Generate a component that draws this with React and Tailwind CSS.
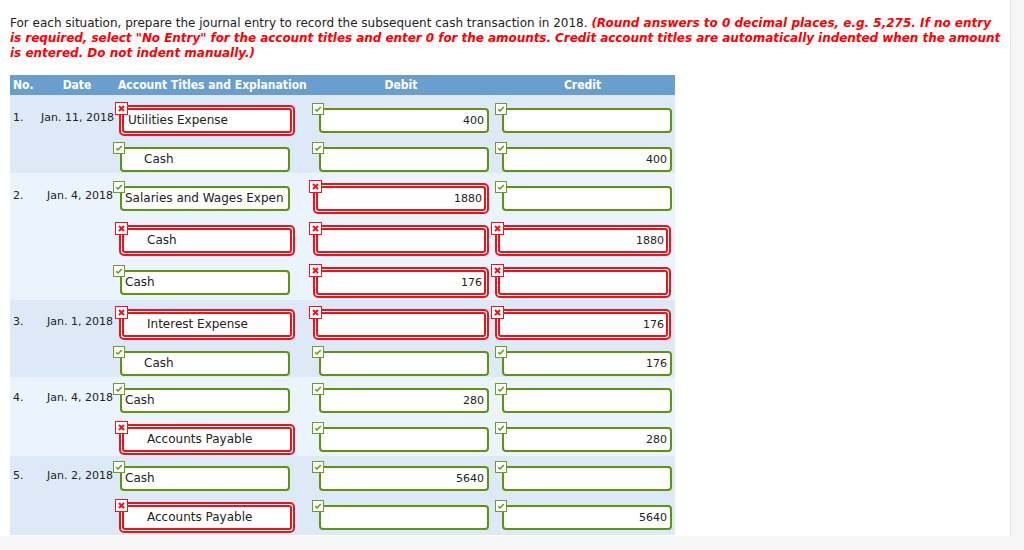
import React from 'react';

const cols = {
    acct: { cell: 'w-[187px]', g: 'ml-[7px]', r: 'ml-[6px]' },
    dr: { cell: 'w-[190px]', g: 'ml-[19px]', r: 'ml-[13px]' },
    cr: { cell: 'w-[185px]', g: 'ml-[12px]', r: 'ml-[5px]' },
};

const entries = [
    {
        no: '1.', date: 'Jan. 11, 2018', bg: 'bg-[#dde9f7]', pt: 'pt-[15px]',
        rows: [
            { h: 'h-[39px]', pt: 'pt-[13px]', acct: ['Utilities Expense', false, false], dr: ['400', true], cr: ['', true] },
            { h: 'h-[39px]', pt: 'pt-[13px]', acct: ['Cash', true, true], dr: ['', true], cr: ['400', true] },
        ],
    },
    {
        no: '2.', date: 'Jan. 4, 2018', bg: 'bg-[#ebf3fd]', pt: 'pt-[15px]',
        rows: [
            { h: 'h-[42px]', pt: 'pt-[13px]', acct: ['Salaries and Wages Expen', true, false], dr: ['1880', false], cr: ['', true] },
            { h: 'h-[42px]', pt: 'pt-[13px]', acct: ['Cash', false, true], dr: ['', false], cr: ['1880', false] },
            { h: 'h-[43px]', pt: 'pt-[13px]', acct: ['Cash', true, false], dr: ['176', false], cr: ['', false] },
        ],
    },
    {
        no: '3.', date: 'Jan. 1, 2018', bg: 'bg-[#dde9f7]', pt: 'pt-[14px]',
        rows: [
            { h: 'h-[39px]', pt: 'pt-[12px]', acct: ['Interest Expense', false, true], dr: ['', false], cr: ['176', false] },
            { h: 'h-[38px]', pt: 'pt-[12px]', acct: ['Cash', true, true], dr: ['', true], cr: ['176', true] },
        ],
    },
    {
        no: '4.', date: 'Jan. 4, 2018', bg: 'bg-[#ebf3fd]', pt: 'pt-[13px]',
        rows: [
            { h: 'h-[40px]', pt: 'pt-[11px]', acct: ['Cash', true, false], dr: ['280', true], cr: ['', true] },
            { h: 'h-[39px]', pt: 'pt-[10px]', acct: ['Accounts Payable', false, true], dr: ['', true], cr: ['280', true] },
        ],
    },
    {
        no: '5.', date: 'Jan. 2, 2018', bg: 'bg-[#dde9f7]', pt: 'pt-[12px]',
        rows: [
            { h: 'h-[39px]', pt: 'pt-[10px]', acct: ['Cash', true, false], dr: ['5640', true], cr: ['', true] },
            { h: 'h-[40px]', pt: 'pt-[10px]', acct: ['Accounts Payable', false, true], dr: ['', true], cr: ['5640', true] },
        ],
    },
];

const CheckIcon = () => (
    <div className="absolute -left-[9px] -top-[7px] w-[12px] h-[12px] bg-white border border-[#6d9b2c]">
        <svg viewBox="0 0 10 10" className="w-[10px] h-[10px]">
            <polyline points="2.2,5.2 4,7 7.8,3" fill="none" stroke="#5f9a1c" strokeWidth="1.5" />
        </svg>
    </div>
);

const XIcon = () => (
    <div className="absolute -left-[6px] -top-[5px] w-[13px] h-[13px] bg-white border border-[#e8151b]">
        <svg viewBox="0 0 11 11" className="w-[11px] h-[11px]">
            <path d="M3 3 L8 8 M8 3 L3 8" stroke="#e8151b" strokeWidth="2" />
        </svg>
    </div>
);

const Field = ({ col, text, ok, indent, num }) => {
    const txt = num ? 'text-right text-[11px]' : 'text-left text-[12px]';
    if (ok) {
        return (
            <div className={`relative ${col.g} w-[170px] h-[25px] border-2 border-[#5f9410] rounded-[4px] bg-white`}>
                <div className={`h-full overflow-hidden whitespace-nowrap leading-[21px] text-[#222] pr-[3px] ${txt} ${indent ? 'pl-[22px]' : 'pl-[3px]'}`}>
                    {text}
                </div>
                <CheckIcon />
            </div>
        );
    }
    return (
        <div className={`relative ${col.r} -mt-[3px] w-[176px] h-[31px] border-2 border-[#e8151b] rounded-[5px] bg-white p-px`}>
            <div className="h-full border-2 border-[#e8151b] rounded-[3px] bg-white">
                <div className={`h-full overflow-hidden whitespace-nowrap leading-[21px] text-[#222] pr-[2px] ${txt} ${indent ? 'pl-[23px]' : 'pl-[4px]'}`}>
                    {text}
                </div>
            </div>
            <XIcon />
        </div>
    );
};

export default function App() {
    return (
        <div className="w-[1024px] h-[550px] bg-[#f6f6f6] overflow-hidden font-['DejaVu_Sans',sans-serif] text-[12px]">
            <div className="w-[1011px] h-[536px] bg-white border-r border-[#e2e2e2]">
                <p className="px-[10px] pt-[16px] leading-[15px] text-[#222] whitespace-nowrap">
                    For each situation, prepare the journal entry to record the subsequent cash transaction in 2018.{' '}
                    <span className="text-[#f00] font-bold italic">
                        (Round answers to 0 decimal places, e.g. 5,275. If no entry
                        <br />
                        <span className="tracking-[-0.05px]">
                            is required, select "No Entry" for the account titles and enter 0 for the amounts. Credit account titles are automatically indented when the amount
                        </span>
                        <br />
                        is entered. Do not indent manually.)
                    </span>
                </p>

                <div className="ml-[10px] mt-[14px] w-[665px]">
                    <div className="flex h-[20px] leading-[20px] bg-[#6a9fcd] text-white font-bold whitespace-nowrap font-['DejaVu_Sans_Condensed','DejaVu_Sans',sans-serif]">
                        <div className="w-[31px] pl-[3px]">No.</div>
                        <div className="w-[72px] text-center">Date</div>
                        <div className="w-[187px] pl-[5px]">Account Titles and Explanation</div>
                        <div className="w-[190px] pl-[12px] text-center">Debit</div>
                        <div className="w-[185px] text-center">Credit</div>
                    </div>

                    {entries.map((e) => (
                        <div key={e.no} className={`flex ${e.bg}`}>
                            <div className={`w-[31px] pl-[3px] ${e.pt} leading-[15px] text-[11px] text-[#222]`}>{e.no}</div>
                            <div className={`w-[72px] text-right whitespace-nowrap ${e.pt} leading-[15px] text-[11px] text-[#222]`}>{e.date}</div>
                            <div className="flex flex-col">
                                {e.rows.map((r, i) => (
                                    <div key={i} className={`flex items-start ${r.h} ${r.pt}`}>
                                        <div className={cols.acct.cell}>
                                            <Field col={cols.acct} text={r.acct[0]} ok={r.acct[1]} indent={r.acct[2]} />
                                        </div>
                                        <div className={cols.dr.cell}>
                                            <Field col={cols.dr} text={r.dr[0]} ok={r.dr[1]} num />
                                        </div>
                                        <div className={cols.cr.cell}>
                                            <Field col={cols.cr} text={r.cr[0]} ok={r.cr[1]} num />
                                        </div>
                                    </div>
                                ))}
                            </div>
                        </div>
                    ))}
                </div>
            </div>
        </div>
    );
}
